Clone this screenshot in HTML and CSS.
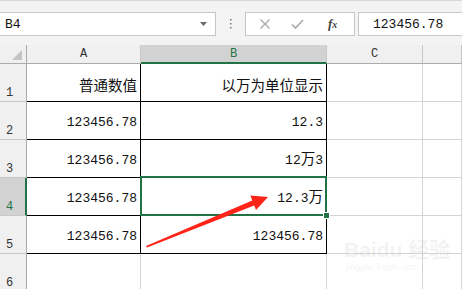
FILE: index.html
```html
<!DOCTYPE html>
<html lang="zh">
<head>
    <meta charset="UTF-8">
    <title>以万为单位显示</title>
    <link rel="stylesheet" href="styles.css">
</head>
<body>
    <!-- Formula bar -->
    <div class="toolbar">
        <div class="name-box">
            <span>B4</span>
            <svg class="drop" width="7" height="4" viewBox="0 0 7 4"><path d="M0 0h7L3.5 4z" fill="#6a6a6a"/></svg>
        </div>
        <div class="dots">
            <svg width="3" height="12" viewBox="0 0 3 12"><rect x="1" y="1" width="1.5" height="1.5" fill="#777"/><rect x="1" y="5" width="1.5" height="1.5" fill="#777"/><rect x="1" y="9" width="1.5" height="1.5" fill="#777"/></svg>
        </div>
        <div class="func-box">
            <svg width="12" height="12" viewBox="0 0 12 12"><path d="M1.5 1.5l9 9M10.5 1.5l-9 9" stroke="#a8a8a8" stroke-width="1.3"/></svg>
            <svg width="13" height="12" viewBox="0 0 13 12"><path d="M1 6.5l3.5 3.5L12 2" fill="none" stroke="#a8a8a8" stroke-width="1.6"/></svg>
            <span class="fx">f<small>x</small></span>
        </div>
        <div class="formula">123456.78</div>
    </div>

    <!-- Sheet -->
    <div class="sheet">
        <div class="h corner">
            <svg width="10" height="10" viewBox="0 0 10 10"><path d="M10 0v10H0z" fill="#c4c4c4"/></svg>
        </div>
        <div class="h col">A</div>
        <div class="h col sel">B</div>
        <div class="h col">C</div>
        <div class="h col"></div>

        <div class="rh">1</div>
        <div class="c t"><span class="v cjk">普通数值</span></div>
        <div class="c t"><span class="v cjk">以万为单位显示</span></div>
        <div class="c"></div>
        <div class="c"></div>

        <div class="rh">2</div>
        <div class="c t"><span class="v">123456.78</span></div>
        <div class="c t"><span class="v">12.3</span></div>
        <div class="c"></div>
        <div class="c"></div>

        <div class="rh">3</div>
        <div class="c t"><span class="v">123456.78</span></div>
        <div class="c t"><span class="v">12<span class="cjk">万</span>3</span></div>
        <div class="c"></div>
        <div class="c"></div>

        <div class="rh sel">4</div>
        <div class="c t"><span class="v">123456.78</span></div>
        <div class="c t active"><span class="v">12.3<span class="cjk">万</span></span></div>
        <div class="c"></div>
        <div class="c"></div>

        <div class="rh">5</div>
        <div class="c t"><span class="v">123456.78</span></div>
        <div class="c t"><span class="v">123456.78</span></div>
        <div class="c"></div>
        <div class="c"></div>

        <div class="rh">6</div>
        <div class="c"></div>
        <div class="c"></div>
        <div class="c"></div>
        <div class="c"></div>
    </div>

    <!-- Annotation arrow -->
    <svg class="arrow" width="462" height="289" viewBox="0 0 462 289">
        <polygon points="146,246 252.3,200.4 250.4,195.6 268,197 256,210 254.2,205.6 147,247.5" fill="#ff2318"/>
    </svg>

    <!-- Watermark -->
    <div class="watermark">
        <div class="wm-big">Bai<span>du</span> 经验</div>
        <div class="wm-small">jingyan.baidu.com</div>
    </div>
</body>
</html>
```

FILE: styles.css
```css
body {
    margin: 0;
    width: 462px;
    height: 289px;
    overflow: hidden;
    background-color: white;
    font-family: "Liberation Mono", "Noto Sans CJK SC", monospace;
    font-size: 13px;
    color: #111;
    position: relative;
}

/* Formula bar */
.toolbar {
    height: 45px;
    box-sizing: border-box;
    border-top: 1px solid #d8d8d8;
    padding-top: 11px;
    background-color: #f3f3f3;
    display: flex;
    align-items: flex-start;
}
.name-box {
    margin-left: -1px;
    width: 217px;
    height: 24px;
    box-sizing: border-box;
    border: 1px solid #c6c6c6;
    background-color: white;
    display: flex;
    align-items: center;
    justify-content: space-between;
    padding: 0 8px 0 5px;
}
.dots {
    width: 29px;
    height: 24px;
    display: flex;
    align-items: center;
    justify-content: center;
}
.func-box {
    width: 110px;
    height: 24px;
    box-sizing: border-box;
    border: 1px solid #c6c6c6;
    background-color: white;
    display: flex;
    align-items: center;
    padding-left: 13px;
    gap: 20px;
}
.fx {
    font-family: "Liberation Serif", serif;
    font-style: italic;
    font-weight: bold;
    font-size: 13px;
    color: #444;
    margin-left: 4px;
}
.fx small {
    font-size: 10px;
}
.formula {
    flex: 1;
    margin-left: 3px;
    margin-right: -1px;
    height: 24px;
    box-sizing: border-box;
    border: 1px solid #c6c6c6;
    background-color: white;
    padding-left: 14px;
    line-height: 23px;
}

/* Sheet grid */
.sheet {
    display: grid;
    grid-template-columns: 27px 114px 186px 96px 1fr;
    grid-template-rows: 19px repeat(6, 38px);
}
.h {
    background-color: #f0f0f0;
    border-right: 1px solid #c8c8c8;
    border-bottom: 1px solid #ababab;
    box-sizing: border-box;
    display: flex;
    align-items: center;
    justify-content: center;
    font-size: 12px;
    color: #333;
}
.h.corner {
    border-right-color: #ababab;
    align-items: flex-end;
    justify-content: flex-end;
    padding: 0 4px 3px 0;
}
.h.sel {
    background-color: #d2d2d2;
    border-bottom: 2px solid #217346;
    color: #217346;
}
.rh {
    background-color: #f0f0f0;
    border-right: 1px solid #ababab;
    border-bottom: 1px solid #c8c8c8;
    box-sizing: border-box;
    display: flex;
    align-items: flex-end;
    padding: 0 0 1px 6px;
    font-size: 12px;
    color: #333;
}
.rh.sel {
    background-color: #d2d2d2;
    border-right: 2px solid #217346;
    color: #217346;
}
.c {
    border-right: 1px solid #d4d4d4;
    border-bottom: 1px solid #d4d4d4;
    box-sizing: border-box;
    display: flex;
    align-items: flex-end;
    justify-content: flex-end;
    padding: 0 3px 8px 0;
    white-space: nowrap;
}
.c.t {
    border-right-color: #000;
    border-bottom-color: #000;
}
.v {
    line-height: 16px;
}
.cjk {
    font-family: "Noto Sans CJK SC", sans-serif;
    font-size: 14.5px;
    line-height: 16px;
}

/* Selected cell */
.active {
    position: relative;
}
.active::after {
    content: "";
    position: absolute;
    top: -2px;
    left: -1px;
    right: -1px;
    bottom: -1px;
    border: 2px solid #217346;
}
.active::before {
    content: "";
    position: absolute;
    right: -4px;
    bottom: -4px;
    width: 5px;
    height: 5px;
    background-color: #217346;
    border: 1px solid white;
    z-index: 1;
}

/* Overlays */
.arrow {
    position: absolute;
    left: 0;
    top: 0;
    pointer-events: none;
}
.watermark {
    position: absolute;
    left: 344px;
    top: 238px;
    color: rgba(200, 200, 200, 0.22);
    font-family: "Liberation Sans", "Noto Sans CJK SC", sans-serif;
    pointer-events: none;
}
.wm-big {
    font-size: 21px;
    font-weight: bold;
    line-height: 24px;
}
.wm-small {
    font-size: 9px;
    padding-left: 2px;
}
```
